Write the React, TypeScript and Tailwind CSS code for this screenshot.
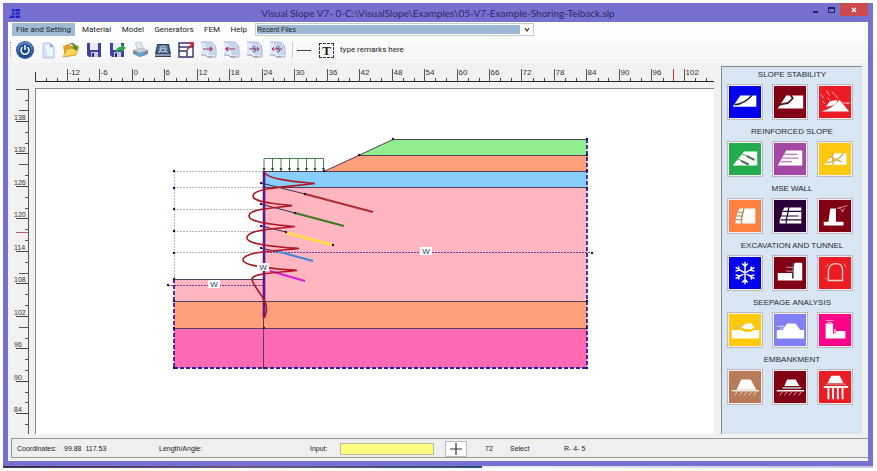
import type { ReactNode } from "react";

const INK = "#1b1b3a";

/* ---------- toolbar icons (18 x 18) ---------- */

function Ic({ children }: { children: ReactNode }) {
  return (
    <svg viewBox="0 0 18 18" className="size-[18px]" aria-hidden="true">
      {children}
    </svg>
  );
}

function Sheet({ children }: { children?: ReactNode }) {
  return (
    <Ic>
      <path d="M1 1h10l5 5v10H9l-2-3H1z" fill="#e2e9f6" />
      <path d="M5 2h7l3 4v8H9z" fill="#c6d5ee" />
      <path d="M1 1h9q6 1 6 8v7H8" fill="none" stroke="#a3b2cc" strokeWidth="1" />
      <path d="M1 14h4l3 2h4" fill="none" stroke="#8393b3" strokeWidth="1" />
      {children}
    </Ic>
  );
}

const floppy = (
  <>
    <path d="M2 2h14v14H4l-2-2z" fill="#4240a0" />
    <path d="M5 2h8v7H5z" fill="#e9ebf8" />
    <path d="M6 11h7v5H6z" fill="#c9cbe4" />
    <path d="M7 12h2v4H7z" fill="#2d2b78" />
  </>
);

const tools: { name: string; icon: ReactNode }[] = [
  {
    name: "Exit",
    icon: (
      <Ic>
        <circle cx="9" cy="9" r="9" fill="#2a5596" />
        <circle cx="9" cy="8" r="7.5" fill="#5c88c2" />
        <circle cx="9" cy="9.5" r="6.5" fill="#1c4583" />
        <path d="M6.5 6.2a4 4 0 1 0 5 0M9 4v5" fill="none" stroke="#fff" strokeWidth="1.5" />
      </Ic>
    ),
  },
  {
    name: "New",
    icon: (
      <Ic>
        <path d="M4 2h7l4 4v11H4z" fill="#d5e6fa" stroke="#a9bedb" strokeWidth=".8" />
        <path d="M6 4h4l1 3h3v8H9z" fill="#eef6ff" />
        <path d="M11 2v4h4z" fill="#8fa9cd" />
      </Ic>
    ),
  },
  {
    name: "Open",
    icon: (
      <Ic>
        <path d="M1 5l6-2 2 2 5-1v10L3 16z" fill="#d9a02c" />
        <path d="M1 16l4-8 12-2-3 8z" fill="#fbd458" stroke="#c88f22" strokeWidth=".6" />
        <path d="M7 3q5-3 7 2l2-1-1 6-5-3 2-1q-1-3-5-3z" fill="#4d8a2a" />
      </Ic>
    ),
  },
  { name: "Save", icon: <Ic>{floppy}</Ic> },
  {
    name: "Save as",
    icon: (
      <Ic>
        {floppy}
        <path d="M8 11q0-5 5-5V3l5 4-5 4V9q-3 0-4 3z" fill="#2ea84a" />
      </Ic>
    ),
  },
  {
    name: "Print",
    icon: (
      <Ic>
        <path d="M4 2l6-1 3 7-6 1z" fill="#dfe8ef" stroke="#a7b4be" strokeWidth=".6" />
        <path d="M2 9l9-2 6 2v4l-8 3-7-3z" fill="#7f8c98" />
        <path d="M2 9l9-2 6 2-8 3z" fill="#c5ced6" />
        <path d="M5 13l6-2 4 3-6 2z" fill="#5fa2cd" />
      </Ic>
    ),
  },
  {
    name: "Screen",
    icon: (
      <Ic>
        <path d="M3 3h12l2 10v3H1v-3z" fill="#34435c" />
        <path d="M4 4h10l1 8H3z" fill="#4f7396" />
        <circle cx="9" cy="8" r="3" fill="none" stroke="#c3d2de" />
        <path d="M5 12l2-4 2-1 2 1 2 4" fill="none" stroke="#c3d2de" />
        <path d="M1 13h16v2H1z" fill="#8d98a8" />
      </Ic>
    ),
  },
  {
    name: "Fit view",
    icon: (
      <Ic>
        <path d="M2 2h14v14H2zM2 6h14M2 10h8v6" fill="#fff" stroke="#34366c" strokeWidth="1.4" />
        <path d="M10 9l5-6M12 2h4v4" fill="none" stroke="#d02030" strokeWidth="1.4" />
      </Ic>
    ),
  },
  {
    name: "Next sheet",
    icon: (
      <Sheet>
        <path d="M3 8h9M10 6l2 2-2 2" fill="none" stroke="#a3305a" strokeWidth="1.2" />
      </Sheet>
    ),
  },
  {
    name: "Previous sheet",
    icon: (
      <Sheet>
        <path d="M3 8h9M5 6L3 8l2 2" fill="none" stroke="#a3305a" strokeWidth="1.2" />
      </Sheet>
    ),
  },
  {
    name: "Next step",
    icon: (
      <Sheet>
        <path d="M3 8h10M11 6l2 2-2 2" fill="none" stroke="#a3305a" />
        <path d="M9.5 6q-3-1-3 .5t2 1.5 1 2-3 0" fill="none" stroke="#4a4a80" />
      </Sheet>
    ),
  },
  {
    name: "Previous step",
    icon: (
      <Sheet>
        <path d="M3 8h10M5 6L3 8l2 2" fill="none" stroke="#a3305a" />
        <path d="M10.5 6q-3-1-3 .5t2 1.5 1 2-3 0" fill="none" stroke="#4a4a80" />
      </Sheet>
    ),
  },
];

/* ---------- module tiles (34 x 34) ---------- */

const hatch = "M6 26l3-4M11 26l3-4M16 26l3-4M21 26l3-4M26 26l3-4";

const modules: { title: string; tiles: { name: string; color: string; art: ReactNode }[] }[] = [
  {
    title: "SLOPE STABILITY",
    tiles: [
      {
        name: "Circular slip",
        color: "bg-[#0000f0]",
        art: (
          <>
            <path d="M4 22l8-12h17v12z" fill="#fff" />
            <path d="M6 20q11-1 19-11" fill="none" stroke="#223" strokeWidth="1.6" />
          </>
        ),
      },
      {
        name: "Block slip",
        color: "bg-[#820014]",
        art: (
          <>
            <path d="M4 24l9-14h18v14z" fill="#fff" />
            <path d="M5 20l10-2 5-5-3-4" fill="none" stroke="#512" strokeWidth="1.8" />
          </>
        ),
      },
      {
        name: "Rainfall",
        color: "bg-[#ec1c24]",
        art: (
          <>
            <path d="M3 27q10-3 13-7l6-5 10 12zM7 22l5-6 8-1q-3 7-13 7z" fill="#fff" />
            <path d="M2 9l3 4M8 5l3 5M14 6l3 4M4 16l2 3M9 12l2 3M18 10l2 3" stroke="#ffb0b0" />
            <path d="M25 18h8M29 19l3-1" stroke="#ffb0b0" />
          </>
        ),
      },
    ],
  },
  {
    title: "REINFORCED SLOPE",
    tiles: [
      {
        name: "Soil nails",
        color: "bg-[#22ac4c]",
        art: (
          <>
            <path d="M4 24l12-15h14v15z" fill="#fff" />
            <path d="M13 19l8 4M19 14l8 4" stroke="#4a6a4a" strokeWidth="2.2" />
            <path d="M9 17l5 2M14 12l6 2" stroke="#22ac4c" />
          </>
        ),
      },
      {
        name: "Geogrid slope",
        color: "bg-[#a348a4]",
        art: (
          <>
            <path d="M4 24L13 8h17v16z" fill="#fff" />
            <path d="M11 12h14M9 16h17M7 20h12" stroke="#a348a4" />
          </>
        ),
      },
      {
        name: "Anchored slope",
        color: "bg-[#ffc90e]",
        art: (
          <>
            <path d="M5 23l12-12h12v12z" fill="#fff" />
            <path d="M8 21q12-1 18-10M14 9l1 14M10 14l14 6" fill="none" stroke="#d8b040" strokeWidth="1.5" />
          </>
        ),
      },
    ],
  },
  {
    title: "MSE WALL",
    tiles: [
      {
        name: "Block wall",
        color: "bg-[#ff8040]",
        art: (
          <>
            <path d="M7 25v-4l1-4 1-4 2-4h17v16z" fill="#fff" />
            <path d="M9 13h6M8 17h6M7 21h6M16 9l-1 4-1 4-1 4v4" fill="none" stroke="#b07858" strokeWidth="1.2" />
          </>
        ),
      },
      {
        name: "Geogrid wall",
        color: "bg-[#2b0038]",
        art: (
          <>
            <path d="M6 25v-4l2-4 1-5 2-4h18v17z" fill="#fff" />
            <path d="M9 12h20M8 17h18M7 21h22M16 7l-1 5-1 5-1 4v4" fill="none" stroke="#2b0038" strokeWidth="1.3" />
          </>
        ),
      },
      {
        name: "Retaining wall",
        color: "bg-[#820014]",
        art: (
          <>
            <path d="M5 27v-4h5l2-14h6v14h8v4z" fill="#fff" />
            <path d="M19 9l11-3M21 8l5 4M24 13l3-4" stroke="#dba0a8" />
          </>
        ),
      },
    ],
  },
  {
    title: "EXCAVATION AND TUNNEL",
    tiles: [
      {
        name: "Ground freezing",
        color: "bg-[#0000f0]",
        art: (
          <path
            d="M17 5v24M7 11l20 12M27 11L7 23M14 7l3 3 3-3M14 27l3-3 3 3M7 15l4-1-1-4M27 15l-4-1 1-4M7 19l4 1-1 4M27 19l-4 1 1 4"
            fill="none"
            stroke="#fff"
            strokeWidth="1.5"
          />
        ),
      },
      {
        name: "Shoring",
        color: "bg-[#820014]",
        art: (
          <>
            <path d="M4 25v-8h15l3-11h8v19z" fill="#fff" />
            <path d="M20 6v17" stroke="#445" strokeWidth="1.8" />
            <path d="M13 11h8M13 15h8" stroke="#c9a" />
          </>
        ),
      },
      {
        name: "Tunnel",
        color: "bg-[#ec1c24]",
        art: (
          <>
            <path d="M10 25V14q1-7 8-7t7 7v11z" fill="none" stroke="#ffd0c8" strokeWidth="1.5" />
            <path d="M7 11l3-4M26 7l3 4M6 22l3 2" stroke="#ff9090" />
          </>
        ),
      },
    ],
  },
  {
    title: "SEEPAGE ANALYSIS",
    tiles: [
      {
        name: "Slope seepage",
        color: "bg-[#ffc90e]",
        art: (
          <>
            <path d="M3 26v-9h9q8 4 15 0h5v9z" fill="#fff" />
            <path d="M13 14l5-4h6l3 5q-7 3-14-1z" fill="#fff" />
            <path d="M4 13h9M6 15h4" stroke="#d8b870" />
          </>
        ),
      },
      {
        name: "Dam seepage",
        color: "bg-[#8080f4]",
        art: (
          <>
            <path d="M3 26v-9h6l5-7h9l5 7h4v9z" fill="#fff" />
            <path d="M3 13h8M6 15h4" stroke="#d8d8ff" />
          </>
        ),
      },
      {
        name: "Wall seepage",
        color: "bg-[#ff0088]",
        art: (
          <>
            <path d="M7 26V10h8v11h3v-3h10v8z" fill="#fff" />
            <path d="M17 16v6" stroke="#fff" strokeWidth="1.2" />
            <path d="M7 7h9M9 9h5" stroke="#ffa0d0" />
          </>
        ),
      },
    ],
  },
  {
    title: "EMBANKMENT",
    tiles: [
      {
        name: "Embankment",
        color: "bg-[#b97a57]",
        art: (
          <>
            <path d="M8 20l5-11h10l6 11z" fill="#fff" />
            <path d="M3 21h29" stroke="#fff" strokeWidth="1.3" />
            <path d={hatch} stroke="#ead6c8" />
          </>
        ),
      },
      {
        name: "Reinforced embankment",
        color: "bg-[#820014]",
        art: (
          <>
            <path d="M11 16l3-7h9l4 7z" fill="#fff" />
            <path d="M9 18h20" stroke="#aab" strokeWidth="2" />
            <path d="M3 21h29" stroke="#fff" strokeWidth="1.5" />
            <path d={hatch} stroke="#d8a8b0" />
          </>
        ),
      },
      {
        name: "Piled embankment",
        color: "bg-[#ec1c24]",
        art: (
          <>
            <path d="M9 13l4-8h9l4 8z" fill="#fff" />
            <path d="M7 14h22" stroke="#c99" />
            <path d="M5 17h26" stroke="#fff" strokeWidth="2" />
            <path d="M10 17v13M15 17v13M20 17v13M25 17v13" stroke="#fff" strokeWidth="2" />
          </>
        ),
      },
    ],
  },
];

/* ---------- rulers ---------- */

const STEP = 32.46;

function TopRuler() {
  const minor = Array.from({ length: 62 }, (_, i) => i + 1).filter((i) => (i % 3 !== 0 || i > 60) && i !== 59);
  return (
    <svg className="h-[25px] w-full" aria-hidden="true">
      <path d="M27 18.5H706" stroke="#222" />
      <path d="M27.5 9V19" stroke="#333" />
      {minor.map((i) => (
        <path key={i} d={`M${Math.round(27 + (i * STEP) / 3) + 0.5} 15V18`} stroke="#444" />
      ))}
      {Array.from({ length: 20 }, (_, i) => {
        const x = Math.round(59 + i * STEP) + 0.5;
        return (
          <g key={i}>
            <path d={`M${x} 6V19`} stroke="#555" />
            <text x={x + 1} y="12" className="fill-[#333] font-['Liberation_Sans',sans-serif] text-[8px]">
              {i * 6 - 12}
            </text>
          </g>
        );
      })}
      <path d="M665.5 6V18" stroke="#c03848" />
    </svg>
  );
}

function SideRuler() {
  return (
    <svg className="w-[27px] shrink-0" aria-hidden="true">
      <path d="M20.5 1V347M8 1.5H20" stroke="#555" />
      {Array.from({ length: 31 }, (_, i) => {
        const y = Math.round(11.5 + (i * STEP) / 3) + 0.5;
        const long = [1, 6, 16, 21].includes(i);
        return i % 3 === 2 ? null : <path key={i} d={`M${long ? 11 : 17} ${y}H20`} stroke="#555" />;
      })}
      {Array.from({ length: 10 }, (_, i) => {
        const y = Math.round(33 + i * STEP) + 0.5;
        return (
          <g key={i}>
            <path d={`M8 ${y}H20`} stroke="#444" />
            <text x="6" y={y - 2} className="fill-[#333] font-['Liberation_Sans',sans-serif] text-[7px]">
              {138 - i * 6}
            </text>
          </g>
        );
      })}
      <path d="M8 144.5H20" stroke="#b06070" />
    </svg>
  );
}

/* ---------- cross section ---------- */

function Tag({ x, y }: { x: number; y: number }) {
  return (
    <g>
      <rect x={x - 6} y={y - 4} width="12" height="8" fill="#fff" />
      <text x={x} y={y + 3} textAnchor="middle" className="fill-[#2b3a66] font-['Liberation_Sans',sans-serif] text-[8px]">
        W
      </text>
    </g>
  );
}

const nodes = [
  [174, 171], [174, 188], [174, 209], [174, 231], [174, 253], [174, 279], [174, 301], [174, 328], [174, 368],
  [261, 183], [261, 204], [261, 226], [261, 248], [305, 194], [295, 213], [286, 232], [333, 245],
  [264, 328], [264, 368], [324, 171], [359, 155], [393, 139], [587, 139], [587, 155], [587, 171], [587, 188],
  [587, 301], [587, 328], [587, 368], [592, 253], [168, 285],
];

function Section() {
  return (
    <svg className="min-w-0 flex-1 bg-white" role="img" aria-label="Cross section of tieback shoring">
      <g transform="translate(-36 -89)">
        <path d="M393 139H587V155H359z" fill="#90ee90" />
        <path d="M359 155H587V171H324z" fill="#ffa07a" />
        <path d="M264 171H587V188H264z" fill="#87cefa" />
        <path d="M264 188H587V301H174V279H264z" fill="#ffb6c1" />
        <path d="M174 301H587V328H174z" fill="#ffa07a" />
        <path d="M174 328H587V368H174z" fill="#ff69b4" />
        <path
          d="M324 171.5L393 139.5H587M359 155.5H587M264 171.5H587M264 187.5H587M174 279.5H264M174 301.5H587M174 328.5H587M263.5 317V368"
          fill="none"
          stroke="#54405a"
        />
        <path
          d="M174 171.5H263M174 187.5H263M174 209.5H263M174 231.5H263M174 252.5H263M174.5 171V279"
          stroke="#bcb4c4"
          strokeDasharray="2 1"
        />
        <path d="M264 252.5H592M168 285.5H264" stroke="#6a3a98" strokeDasharray="2 1" />
        <path d="M174 279V368M587 139V368M174 368H587" fill="none" stroke="#3020a0" strokeWidth="1.8" strokeDasharray="4 2" />
        <path
          d="M264 171V158.5H323.5V171M272.5 158V171M281 158V171M289.5 158V171M298 158V171M306.5 158V171M315 158V171"
          fill="none"
          stroke="#4c7e54"
        />
        {[264, 272.5, 281, 289.5, 298, 306.5, 315, 323.5].map((x) => (
          <path key={x} d={`M${x - 1.5} 168h3l-1.5 3z`} fill="#244a2c" />
        ))}
        <path d="M261 183L305 194M261 204L295 213M261 226L286 232M261 248L278 252" stroke="#33304a" />
        <path d="M264 171V318" stroke="#5a1690" strokeWidth="2.6" />
        <path d="M305 194L373 212" stroke="#b22a36" strokeWidth="2" />
        <path d="M295 213L344 226" stroke="#3a7a22" strokeWidth="2" />
        <path d="M287 233L333 245" stroke="#ffe040" strokeWidth="2.6" />
        <path d="M276 251L313 261" stroke="#3f86dc" strokeWidth="2" />
        <path d="M270 271L305 281" stroke="#d81cd8" strokeWidth="2" />
        <path
          d="M264 172C268 180 300 182 315 183.5C300 186 253 187 253 196C253 203 280 204 292 205.5C280 208 249 208 249 216C249 223 278 225 295 226.5C276 229 247 229 247 238C247 245 280 247 299 248.5C280 251 243 251 243 260C243 267 280 269 297 270.5C276 273 253 273 252 279C252 284 262 295 264 300C268 307 267 313 264 318"
          fill="none"
          stroke="#b01828"
          strokeWidth="1.6"
        />
        {nodes.map(([x, y]) => (
          <circle key={`${x}-${y}`} cx={x} cy={y} r="1.2" fill={INK} />
        ))}
        <Tag x={426} y={251} />
        <Tag x={263} y={267} />
        <Tag x={214} y={284} />
      </g>
    </svg>
  );
}

/* ---------- window ---------- */

const menus = ["Material", "Model", "Generators", "FEM", "Help"];

function TitleBar() {
  return (
    <header className="flex h-[19px] items-start justify-between">
      <div className="w-[66px] pt-[5px] pl-[6px]">
        <svg viewBox="0 0 12 11" className="h-[11px] w-3" aria-hidden="true">
          <path d="M3 1h8v9H0l2-3h1z" fill="#2222c4" />
          <path d="M1 4h10M0 7h11M6 1v9" stroke="#7670d8" />
        </svg>
      </div>
      <h1 className="font-[Lato,sans-serif] text-[10px] leading-[20px] whitespace-nowrap text-[#2c2a66]">
        Visual Slope V7- 0-C:\VisualSlope\Examples\05-V7-Example-Shoring-Teiback.slp
      </h1>
      <div className="flex w-[66px] justify-end pr-[5px]">
        <button type="button" aria-label="Minimize" className="flex h-[13px] w-4 items-end justify-center pb-[3px]">
          <span className="h-[2px] w-[5px] bg-[#25235c]" />
        </button>
        <button type="button" aria-label="Maximize" className="flex h-[13px] w-4 items-center justify-center">
          <span className="h-[6px] w-[7px] border border-t-2 border-[#25235c]" />
        </button>
        <button type="button" aria-label="Close" className="flex h-[13px] w-7 shrink-0 items-center justify-center bg-[#cb4a50]">
          <svg viewBox="0 0 6 6" className="size-[6px]" aria-hidden="true">
            <path d="M1 1l4 4M5 1L1 5" stroke="#fff" strokeWidth="1.3" />
          </svg>
        </button>
      </div>
    </header>
  );
}

export default function App() {
  return (
    <div className="flex min-h-screen flex-col bg-white p-[3px] pr-1 font-[Roboto,'Noto_Sans',sans-serif] text-[8px] text-[#222]">
      <div className="flex flex-1 flex-col bg-[#7670d0]">
        <TitleBar />
        <div className="mx-[5px] mb-[5px] flex flex-1 flex-col bg-[#f1f1f1]">
          <nav className="flex h-[15px] items-center bg-[#fcfdfc] pl-1">
            <button type="button" className="mr-[7px] h-[13px] w-[63px] bg-[#a0bbd6] text-center">
              File and Setting
            </button>
            <div className="flex w-[165px] justify-between">
              {menus.map((m) => (
                <button key={m} type="button" className="h-[13px] whitespace-nowrap">
                  {m}
                </button>
              ))}
            </div>
            <div className="relative ml-2 h-[13px] w-[279px] border border-[#c8ccd2] bg-white">
              <select
                aria-label="Recent files"
                className="block h-[11px] w-[265px] appearance-none border border-white bg-[#9db8d4] font-['Liberation_Sans',sans-serif] text-[7px] leading-[9px]"
              >
                <option>Recent Files</option>
              </select>
              <svg viewBox="0 0 6 4" className="pointer-events-none absolute top-[4px] right-[3px] h-1 w-[6px]" aria-hidden="true">
                <path d="M1 0l2 3 2-3" fill="none" stroke="#333" strokeWidth="1.2" />
              </svg>
            </div>
          </nav>

          <div className="flex h-[26px] items-center bg-linear-to-b from-[#fcfdfc] to-[#f4f5f4] pl-[2px]">
            <span className="h-4 border-l border-dotted border-[#b8a8a8]" />
            <div className="ml-[5px] flex">
              {tools.map((t) => (
                <button key={t.name} type="button" aria-label={t.name} className="flex w-[23px] justify-start">
                  {t.icon}
                </button>
              ))}
            </div>
            <span className="h-4 border-l border-[#cfcfcf]" />
            <button type="button" aria-label="Line" className="ml-1 flex h-4 w-[14px] items-center">
              <span className="h-px w-full bg-[#444]" />
            </button>
            <label className="flex items-center">
              <span className="ml-2 flex size-[15px] items-center justify-center border border-dashed border-[#333] bg-white font-['Liberation_Serif',serif] text-[13px] leading-none font-bold">
                T
              </span>
              <input aria-label="Remarks" defaultValue="type remarks here" className="ml-[6px] w-32 bg-transparent" />
            </label>
          </div>

          <main className="flex flex-1">
            <div className="flex min-w-0 flex-1 flex-col">
              <TopRuler />
              <div className="flex flex-1">
                <SideRuler />
                <div className="flex min-w-0 flex-1 border-t border-l border-[#888]">
                  <Section />
                </div>
              </div>
            </div>
            <aside className="mt-[3px] mr-[6px] ml-[7px] w-[141px] border-t border-l border-[#888] bg-[#d8e5f2] pt-[2px] font-['Liberation_Sans',sans-serif]">
              {modules.map((m) => (
                <section key={m.title} className="pb-[6px]">
                  <h2 className="mb-[3px] h-3 text-center text-[8px] leading-3 text-[#262a36]">{m.title}</h2>
                  <div className="flex gap-[9px] pl-[5px]">
                    {m.tiles.map((t) => (
                      <button
                        key={t.name}
                        type="button"
                        aria-label={t.name}
                        className="size-9 border border-[#c4b8c0] bg-[#f6eef2] p-px"
                      >
                        <svg viewBox="0 0 34 34" className={`size-8 ${t.color}`} aria-hidden="true">
                          {t.art}
                        </svg>
                      </button>
                    ))}
                  </div>
                </section>
              ))}
            </aside>
          </main>

          <footer className="mt-1 mb-[3px] ml-[3px] flex h-5 items-center border border-r-0 border-[#999] bg-[#efeff0] pt-[2px] pl-[5px] font-['Liberation_Sans',sans-serif] text-[7px]">
            <span className="w-[47px]">Coordinates:</span>
            <output className="w-[95px]">99.88&nbsp; 117.53</output>
            <span className="w-[151px]">Length/Angle:</span>
            <label htmlFor="command" className="w-[30px]">
              Input:
            </label>
            <input id="command" className="h-3 w-[94px] border border-[#b8bc98] bg-[#ffff80] px-1" />
            <button
              type="button"
              aria-label="Crosshair"
              className="ml-[11px] flex h-4 w-[22px] items-center justify-center border border-[#bbb] bg-white"
            >
              <svg viewBox="0 0 12 12" className="size-3" aria-hidden="true">
                <path d="M6 0v12M0 6h12" stroke="#333" strokeWidth="1.2" />
              </svg>
            </button>
            <span className="ml-[18px] w-[25px]">72</span>
            <span className="w-[54px]">Select</span>
            <span>R- 4- 5</span>
          </footer>
        </div>
      </div>
      <div className="flex h-[2px]">
        <div className="w-[55%] bg-linear-to-r from-[#3a3050] via-[#6a5a80] to-[#2c4a80]" />
        <div className="flex-1 bg-linear-to-r from-[#f0f2fa] to-[#c8c4de]" />
      </div>
    </div>
  );
}
